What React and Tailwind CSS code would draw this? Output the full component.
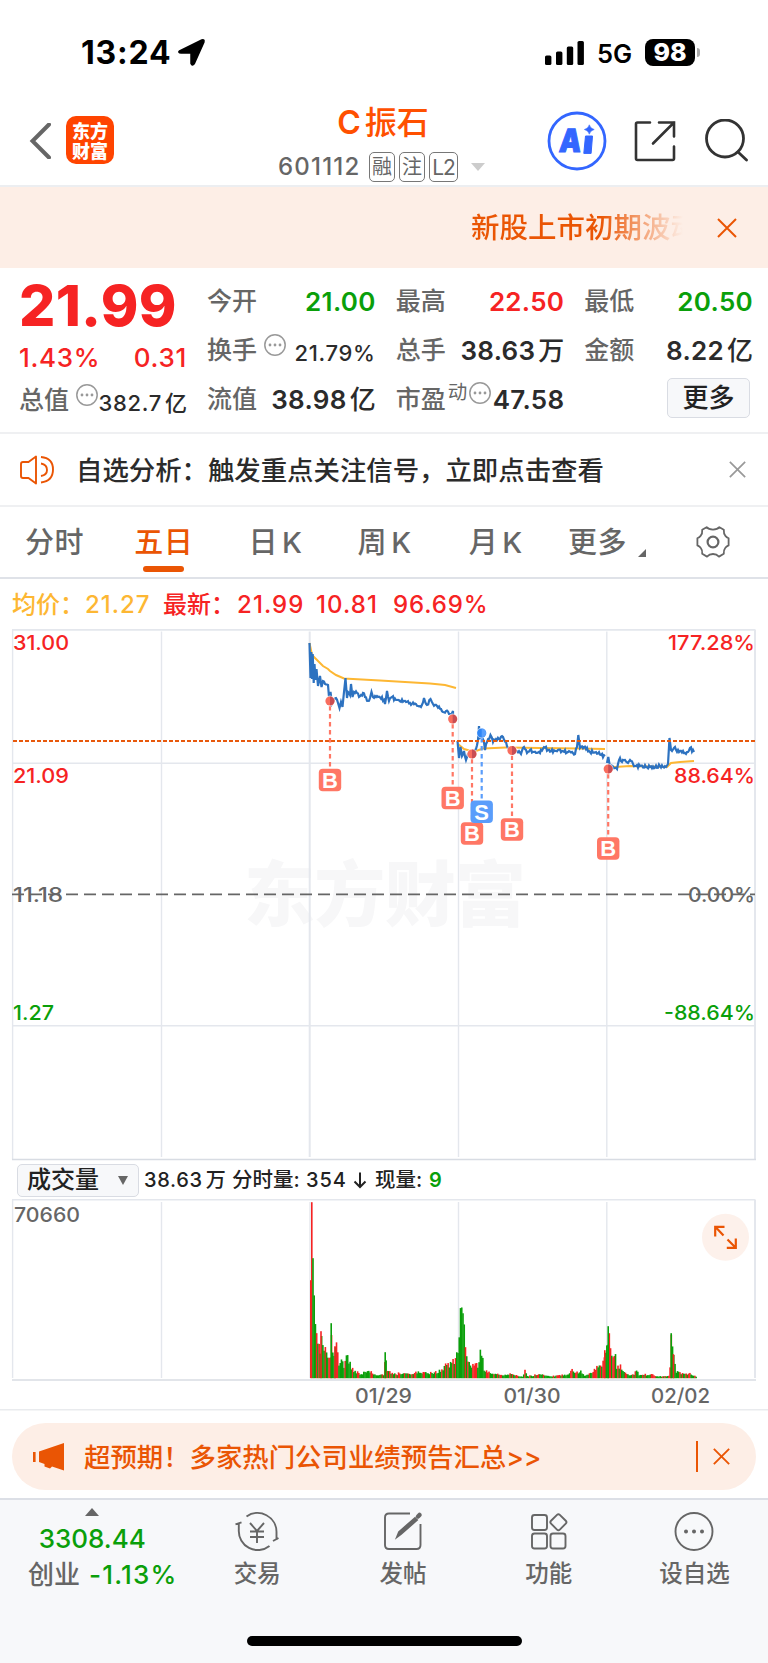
const UP = "text-[#f62323]";
const DOWN = "text-[#0a9f0a]";

const TABS = [
  { label: "分时", left: "ml-[25px]" },
  { label: "五日", left: "ml-[50px]", active: true },
  { label: "日K", left: "ml-[55px]" },
  { label: "周K", left: "ml-[55px]" },
  { label: "月K", left: "ml-[57px]" },
  { label: "更多", left: "ml-[45px]" },
];

// price line, one list of [x, y] per trading day
const PRICE = [
  [[309.5,643],[310.5,678],[311.3,652],[312,679],[312.7,654],[313.7,683],[314.5,664],[315.5,680],[316.5,669],[318,686],[320,676],[321.5,687],[323,681],[325,684],[328,685],[329,697],[330.5,692],[332,704],[334,700],[336,698],[338,703],[339.5,708],[341,702],[342.5,707],[343.8,694],[345.5,678],[347,698],[348,692],[350,695],[351,684],[352.5,697],[354,692],[357,693],[359,697],[361,695],[363,693],[365,697],[368,701],[370,698],[371.5,692],[373,697],[378,697],[382,697],[385,704],[387,691],[389,701],[392,697],[396,700],[404,701],[410,703],[416,704],[421,707],[424,698],[427,705],[430.5,699],[433,704],[437,706],[441,709],[443,712],[446,711],[450,714],[453,711],[453,718]],
  [[457.5,741],[459,758],[460.5,747],[462,756],[464,751],[466,760],[468,754],[472,754],[476,749],[478,740],[479,726],[480,738],[482,735],[484,742],[485,750],[487,742],[490.5,735],[493,742],[496,739],[500,739],[503,737],[506,742],[508,748],[511,750],[516,751],[521,754],[524,747],[527,753],[530,750],[534,752],[540,753],[544,747],[548,750],[555,751],[562,751],[568,752],[575,754],[577,747],[578.3,735],[580,748],[584,747],[590,752],[596,752],[601,755],[605,756]],
  [[607,763],[608.3,757],[610,767],[615,768],[617,769],[620,758],[622,762],[625,760],[628,763],[631,761],[635,766],[640,766],[650,767],[660,766],[666,767],[668,764],[669.5,738],[671,750],[674,748],[679,752],[683,751],[686,754],[690,748],[694,752]],
];

const AVERAGE = [
  "309.5,643 312,655 318,661 323,666 328,669 330,671 336,675 344,678.5 380,680.5 430,683.5 445,685 456,688",
  "458,744 464,749 471,751 476,751 483,748.5 506,747.5 540,748 580,748.5 605,749",
  "607,766 615,767 630,766 667,767 671,763 680,762 694,761",
];

const TRADES = [
  { type: "B", x: 330, y: 701, badge: 780 },
  { type: "B", x: 452.7, y: 719, badge: 798 },
  { type: "B", x: 472, y: 754, badge: 833.5 },
  { type: "S", x: 481.7, y: 733, badge: 811.8 },
  { type: "B", x: 512, y: 750.5, badge: 829.5 },
  { type: "B", x: 608.2, y: 769, badge: 848.5 },
];

// volume profile: [x, height]
const VOLUME = [
  [310,98],[311.3,176],[312.5,120],[314,58],[316,46],[318,30],[320,22],[321,44],[323,32],[325,28],[327,19],[329,16],[330.3,18],[331.3,55],[332.5,20],[335,32],[337,20],[340,14],[341,21],[343,14],[346,22],[349,20],[351,9],[355,7],[360,4],[363,6],[368,7],[375,3],[383.5,4],[385,26],[386.5,8],[395,4],[400,5],[410,4],[420,7],[430,5],[436,6],[443,11],[450,16],[455,20],[458,32],[459.5,70],[461.5,71],[463,58],[464,38],[466,20],[470,14],[475,13],[478,14],[479.5,27],[481.5,26],[483,8],[490,5],[500,3],[510,5],[518,2],[522.5,2],[524,7],[527,2],[540,4],[550,2],[560,3],[568,4],[570,8],[575,5],[580,8],[584,3],[590,5],[595,9],[600,13],[604,24],[606,30],[608,53],[610,25],[613,14],[614.5,24],[616,10],[620,12],[624,5],[630,3],[634,4],[636,9],[638,3],[650,4],[655,2],[668,2],[669.5,12],[671,46],[672.3,25],[673.5,22],[675,8],[680,5],[690,4],[696,1],
];

// single minutes that stand out from the profile
const SPIKES = [
  { x: 310, h: 98, red: true },
  { x: 311, h: 176, red: true },
  { x: 312.2, h: 120 },
  { x: 320.2, h: 47, red: true },
  { x: 330.4, h: 55 },
  { x: 334.2, h: 32, red: true },
  { x: 384.4, h: 26 },
  { x: 604, h: 28, red: true },
  { x: 607.4, h: 52 },
  { x: 670.4, h: 45 },
  { x: 672.6, h: 24, red: true },
];

// stable pseudo random value in 0..1
function noise(n) {
  const v = Math.sin(n * 127.1) * 43758.5453;
  return v - Math.floor(v);
}

function pricePoints(list) {
  const out = [];
  list.forEach(([x, y], i) => {
    out.push(`${x},${y}`);
    const next = list[i + 1];
    if (!next) return;
    const steps = Math.floor(next[0] - x);
    for (let s = 1; s < steps; s++) {
      const t = s / steps;
      const dy = (noise(x + s) - 0.5) * 3.6;
      out.push(`${(x + (next[0] - x) * t).toFixed(1)},${(y + (next[1] - y) * t + dy).toFixed(1)}`);
    }
  });
  return out.join(" ");
}

function volumeBars() {
  const bars = [];
  let k = 0;
  for (let x = 313.4; x <= 696; x += 1.24) {
    while (k < VOLUME.length - 2 && VOLUME[k + 1][0] < x) k++;
    const [x0, h0] = VOLUME[k];
    const [x1, h1] = VOLUME[k + 1];
    const base = h0 + ((h1 - h0) * (x - x0)) / (x1 - x0);
    const red = base < 50 && noise(x * 3 + 1) > 0.7;
    const h = Math.max(1, base > 50 ? base : base * ((red ? 0.9 : 0.7) + noise(x) * 0.4));
    bars.push({ x, h, red });
  }
  return bars.concat(SPIKES);
}

function Close({ size, className, width = 2 }) {
  return (
    <svg width={size} height={size} viewBox="0 0 20 20" className={className} fill="none" stroke="currentColor" strokeWidth={width}>
      <path d="M1 1 19 19M19 1 1 19" />
    </svg>
  );
}

function Dots() {
  return (
    <svg width="22" height="22" viewBox="0 0 22 22" className="shrink-0" fill="none" stroke="#999">
      <circle cx="11" cy="11" r="10.2" strokeWidth="1.5" />
      <path d="M6 11h.01M11 11h.01M16 11h.01" strokeWidth="2.8" strokeLinecap="round" />
    </svg>
  );
}

function StatusBar() {
  return (
    <div className="flex h-[104px] items-center pl-[81px] text-black">
      <span className="w-[96px] pt-[2px] text-[32px] leading-none font-bold tracking-[0.8px]">13:24</span>
      <svg width="29" height="29" viewBox="0 0 28 28">
        <path d="M2.5 12.5 24 2Q26.6 1.2 25.9 4L16.5 25Q14.8 27.4 13.6 24.5V14.5H4Q0.6 14 2.5 12.5Z" fill="#000" stroke="#000" strokeWidth="1.6" strokeLinejoin="round" />
      </svg>
      <svg width="40" height="25" viewBox="0 0 40 25" className="ml-[339px]">
        <rect x="0" y="15.5" width="6.4" height="9.5" rx="1.6" />
        <rect x="11" y="11.5" width="6.4" height="13.5" rx="1.6" />
        <rect x="21.8" y="6.5" width="6.4" height="18.5" rx="1.6" />
        <rect x="32.5" y="1" width="6.4" height="24" rx="1.6" />
      </svg>
      <span className="ml-[12px] w-[48px] pt-[4px] text-[25.5px] leading-none font-semibold">5G</span>
      <span className="flex h-[27px] w-[50px] items-center justify-center rounded-[8px] bg-black text-[25px] leading-none font-extrabold text-white">98</span>
      <span className="ml-[2px] h-[9px] w-[3px] rounded-r-full bg-[#aaa]" />
    </div>
  );
}

function NavBar() {
  return (
    <div className="flex h-[83px] items-start border-b-2 border-[#eceef1]">
      <svg width="22" height="36" viewBox="0 0 22 36" className="mt-[19px] ml-[29px]" fill="none" stroke="#666" strokeWidth="4">
        <path d="M20 1.5 3.5 18 20 34.5" strokeLinecap="round" />
      </svg>
      <div className="mt-[12px] ml-[15px] flex h-[48px] w-[48px] flex-col items-center justify-center rounded-[10px] bg-[#ff4400] font-['Noto_Sans_CJK_SC',sans-serif] text-[18px] leading-[20px] font-black text-white">
        <span>东方</span>
        <span>财富</span>
      </div>
      <div className="ml-[164px] w-[210px]">
        <div className="flex h-[37px] items-center justify-center gap-[4px] text-[32px] leading-none font-semibold text-[#ff5000]">
          <span>C</span>
          <span className="font-medium">振石</span>
        </div>
        <div className="mt-[3px] flex h-[46px] items-center text-[#666]">
          <span className="w-[91px] text-[24px] leading-none font-medium tracking-[1.2px]">601112</span>
          <span className="mr-[4px] flex h-[30px] w-[26px] items-center justify-center rounded-[5px] border border-[#777] text-[20px] leading-none">融</span>
          <span className="mr-[4px] flex h-[30px] w-[26px] items-center justify-center rounded-[5px] border border-[#777] text-[20px] leading-none">注</span>
          <span className="flex h-[30px] w-[29px] items-center justify-center rounded-[5px] border border-[#777] text-[21px] leading-none tracking-[-1px]">L2</span>
          <svg width="14" height="8" viewBox="0 0 14 8" className="ml-[13px]"><path d="M0 0h14L7 8Z" fill="#ccc" /></svg>
        </div>
      </div>
      <svg width="60" height="60" viewBox="0 0 60 60" className="mt-[7px] ml-[59px]">
        <circle cx="30" cy="30" r="28" fill="none" stroke="#3366ff" strokeWidth="2.8" />
        <text x="12" y="41" fontSize="32" fontWeight="900" fill="#3366ff" stroke="#3366ff" transform="skewX(-5) translate(3 0)" textLength="22" lengthAdjust="spacingAndGlyphs">A</text>
        <path d="M38.5 25h7l-1.4 17.4h-7.3Z" fill="#3366ff" stroke="#3366ff" strokeLinejoin="round" />
        <path d="M42.3 13.8Q43.2 17.6 47.2 18.5 43.2 19.5 42.3 23.2 41.4 19.5 37.4 18.5 41.4 17.6 42.3 13.8Z" fill="#3366ff" stroke="#3366ff" strokeWidth=".6" />
      </svg>
      <svg width="44" height="44" viewBox="0 0 44 44" className="mt-[15px] ml-[26px]" fill="none" stroke="#333" strokeWidth="2.6" strokeLinecap="round">
        <path d="M17 3.5H4.5Q3 3.5 3 5V39.5Q3 41 4.5 41H39.5Q41 41 41 39.5V27.5M26 3.5H41V17.5M41 3.5 20 24.5" />
      </svg>
      <svg width="44" height="44" viewBox="0 0 44 44" className="mt-[15px] ml-[27px]" fill="none" stroke="#333" strokeWidth="2.8" strokeLinecap="round">
        <circle cx="21" cy="19.5" r="18.5" />
        <path d="m34 33 8.5 8" />
      </svg>
    </div>
  );
}

function Notice() {
  return (
    <div className="flex h-[81px] items-center bg-[#fdeee6] text-[#ea5504]">
      <div className="ml-[471px] w-[216px] overflow-hidden bg-linear-to-r from-[#ea5504] from-60% to-[#ea550400] to-98% bg-clip-text text-[28.5px] leading-[40px] font-medium whitespace-nowrap text-transparent">
        新股上市初期波动
      </div>
      <Close size="20" className="ml-[30px]" />
    </div>
  );
}

function Cell({ label, value, unit, extra, small, color = "text-[#2b2b2b]" }) {
  return (
    <div className="flex h-[49px] items-center whitespace-nowrap">
      <span className="text-[25px] leading-none font-medium text-[#666]">{label}</span>
      {extra}
      <span className={`ml-auto leading-none ${color} ${small ? "pt-[5px] text-[22px] font-medium tracking-[0.7px]" : "text-[26px] font-semibold tracking-[0.3px]"}`}>
        {value}
        {unit && <span className="ml-[3px] font-medium tracking-normal">{unit}</span>}
      </span>
    </div>
  );
}

function Quote() {
  return (
    <div className="flex h-[166px] border-b-2 border-[#eff0f2] pt-[9px]">
      <div className="ml-[19px] w-[168px]">
        <div className={`h-[57px] text-[57px] leading-[57px] font-extrabold tracking-[0.3px] whitespace-nowrap ${UP}`}>21.99</div>
        <div className={`flex h-[42px] items-center justify-between pt-[6px] text-[26px] leading-none font-medium tracking-[0.7px] ${UP}`}>
          <span>1.43%</span>
          <span>0.31</span>
        </div>
        <Cell label="总值" value="382.7" unit="亿" small extra={<span className="-mr-[6px] ml-[7px] -mt-[12px]"><Dots /></span>} />
      </div>
      <div className="ml-[20px] grid w-[546px] grid-cols-3 content-start gap-x-[20px]">
        <Cell label="今开" value="21.00" color={DOWN} />
        <Cell label="最高" value="22.50" color={UP} />
        <Cell label="最低" value="20.50" color={DOWN} />
        <Cell label="换手" value="21.79%" small extra={<span className="ml-[7px] -mt-[11px]"><Dots /></span>} />
        <Cell label="总手" value="38.63" unit="万" />
        <Cell label="金额" value="8.22" unit="亿" />
        <Cell label="流值" value="38.98" unit="亿" />
        <Cell
          label="市盈"
          value="47.58"
          extra={
            <span className="-mt-[13px] flex items-center pl-[2px] text-[19.5px] leading-none text-[#666]">
              动<span className="ml-[2px]"><Dots /></span>
            </span>
          }
        />
        <div className="flex h-[49px] items-start justify-end pt-[3px] pr-[3px]">
          <button className="h-[40px] w-[83px] rounded-[5px] border border-[#d9dce3] bg-[#f7f8fa] text-[26px] leading-none font-medium text-[#222]">更多</button>
        </div>
      </div>
    </div>
  );
}

function SignalRow() {
  return (
    <div className="flex h-[73px] items-center border-b-2 border-[#eff0f2]">
      <svg width="36" height="30" viewBox="0 0 36 30" className="ml-[19px]" fill="none" stroke="#ea5504" strokeWidth="1.9">
        <path d="M17 1.5V28.5L9.5 23H4Q2 23 2 21V9Q2 7 4 7H9.5ZM22 2Q34 3 34 14.5 34 26 22 27.5M22 8.5Q28 9.5 28 15 28 20 22 21" strokeLinejoin="round" />
      </svg>
      <span className="ml-[21px] w-[640px] pt-[2px] text-[26.4px] leading-none font-medium text-[#2b2b2b]">自选分析：触发重点关注信号，立即点击查看</span>
      <Close size="17" className="ml-[13px] text-[#999]" />
    </div>
  );
}

function Tabs() {
  return (
    <div className="flex h-[72px] items-center border-b-2 border-[#dfe2e8] text-[29px] leading-none font-medium tracking-[0.6px] text-[#666]">
      {TABS.map((t) => (
        <div key={t.label} className={`relative flex h-full items-center gap-[4px] whitespace-nowrap ${t.left} ${t.active ? "text-[#ea5504]" : ""}`}>
          {t.label.endsWith("K") ? (
            <>
              <span>{t.label[0]}</span>
              <span>K</span>
            </>
          ) : (
            <span>{t.label}</span>
          )}
          {t.active && <span className="absolute bottom-[5px] left-[9px] h-[6px] w-[41px] rounded-full bg-[#ea5504]" />}
        </div>
      ))}
      <svg width="8" height="8" viewBox="0 0 8 8" className="mt-[22px] ml-[11px]"><path d="M8 0v8H0Z" fill="#666" /></svg>
      <svg width="34" height="34" viewBox="0 0 34 34" className="ml-[50px]" fill="none" stroke="#666" strokeWidth="1.8">
        <path d="M10.6 2.2Q12.6 4.6 17 4.6T23.4 2.2L27.8 4.8Q27.6 9 29.4 10.8 30.6 12.2 32.6 13.2V20.4Q30.4 21.4 29.2 23 27.6 25 27.8 28.8L23 31.6Q20.6 29 17 29T11 31.6L6.2 28.8Q6.6 25.2 4.8 23 3.6 21.4 1.4 20.4V13.2Q3.4 12.2 4.6 10.8 6.6 8.6 6.2 4.8Z" strokeLinejoin="round" />
        <circle cx="17" cy="17" r="5.4" strokeWidth="2.2" />
      </svg>
    </div>
  );
}

function Legend() {
  return (
    <div className={`flex h-[50px] items-center pt-[2px] pl-[12px] text-[24px] leading-none font-medium whitespace-nowrap ${UP}`}>
      <span className="w-[73px] text-[#fdb733]">均价：</span>
      <span className="w-[78px] tracking-[1px] text-[#fdb733]">21.27</span>
      <span className="w-[74px]">最新：</span>
      <span className="w-[79px] tracking-[1.1px]">21.99</span>
      <span className="w-[77px] tracking-[1.1px]">10.81</span>
      <span className="tracking-[0.9px]">96.69%</span>
    </div>
  );
}

function Axis({ x, y, w, right, fill, children }) {
  return (
    <text x={x} y={y} fontSize="20" fontWeight="500" fill={fill} textAnchor={right ? "end" : "start"} textLength={w} lengthAdjust="spacingAndGlyphs">
      {children}
    </text>
  );
}

function PriceChart() {
  return (
    <svg width="768" height="532" viewBox="0 629 768 532" className="block shrink-0">
      <text x="244" y="920" fontSize="71" fontWeight="900" fill="#f7f7f8" textLength="282" className="font-['Noto_Sans_CJK_SC']">东方财富</text>
      <g stroke="#e4e7ed" strokeWidth="1.4" fill="none">
        <path d="M12.6 629.7V1159.5M161.5 631.5V1157M458.5 631.5V1157M606.8 631.5V1157M12 763.3H755M12 1025.7H755" />
        <path d="M309.7 631.5V1157M755 629.5V1159.5M12 629.7H755" strokeWidth="2" />
        <path d="M12 1159.5H756" stroke="#d8dce3" strokeWidth="1.6" />
      </g>
      <path d="M12 894.3H755" stroke="#666" strokeWidth="1.8" strokeDasharray="12 6" />
      {AVERAGE.map((points) => (
        <polyline key={points} points={points} fill="none" stroke="#fdb733" strokeWidth="2" />
      ))}
      {PRICE.map((day, i) => (
        <polyline key={i} points={pricePoints(day)} fill="none" stroke="#2d72c0" strokeWidth="2.2" />
      ))}
      <path d="M13 741H755" stroke="#e8590c" strokeWidth="2.2" strokeDasharray="4 2" />
      {TRADES.map((t, i) => {
        const color = t.type === "B" ? "#ff7765" : "#5a9dfb";
        return (
          <g key={i}>
            <path d={`M${t.x} ${t.y + 5}V${t.badge - 11}`} stroke={color} strokeWidth="2.2" strokeDasharray="4.5 3.5" />
            <circle cx={t.x} cy={t.y} r="5.4" fill="#fff" opacity="0.7" />
            <circle cx={t.x} cy={t.y} r="4.6" fill={t.type === "B" ? "#f86d5e" : "#2f86f6"} />
            <path d={`M${t.x} ${t.y}v-4.4a4.4 4.4 0 0 1 0 8.8Z`} fill={t.type === "B" ? "#b84350" : "#68a8ff"} opacity="0.75" />
            <rect x={t.x - 11.2} y={t.badge - 11.2} width="22.4" height="22.4" rx="4" fill={color} />
            <text x={t.x} y={t.badge + 7.8} fontSize="22" fontWeight="700" fill="#fff" textAnchor="middle" className="font-['Liberation_Sans']">{t.type}</text>
          </g>
        );
      })}
      <Axis x="13" y="650" w="56" fill="#f62323">31.00</Axis>
      <Axis x="13" y="782.5" w="56" fill="#f62323">21.09</Axis>
      <Axis x="13" y="901.5" w="50" fill="#666">11.18</Axis>
      <Axis x="13" y="1019.5" w="41" fill="#0a9f0a">1.27</Axis>
      <Axis x="755" y="650" w="87" right fill="#f62323">177.28%</Axis>
      <Axis x="755" y="782.5" w="81" right fill="#f62323">88.64%</Axis>
      <Axis x="755" y="901.5" w="67" right fill="#666">0.00%</Axis>
      <Axis x="755" y="1019.5" w="91" right fill="#0a9f0a">-88.64%</Axis>
    </svg>
  );
}

function VolumeHeader() {
  return (
    <div className="flex h-[38px] shrink-0 items-center pl-[17px] text-[20px] leading-none font-medium whitespace-nowrap text-[#222]">
      <div className="flex h-[33px] w-[122px] items-center rounded-[5px] border border-[#d9dce3] bg-[#f7f8fa] pl-[9px] text-[24px]">
        成交量
        <svg width="10" height="9" viewBox="0 0 10 9" className="ml-[19px]"><path d="M0 0h10L5 9Z" fill="#666" /></svg>
      </div>
      <span className="ml-[5px] w-[88px] tracking-[0.7px]">38.63<span className="ml-[3px]">万</span></span>
      <span className="w-[74px] text-[20.5px]">分时量:</span>
      <span className="w-[46px] tracking-[0.9px]">354</span>
      <svg width="16" height="18" viewBox="0 0 16 18" className="mr-[7px]" fill="none" stroke="#222" strokeWidth="2"><path d="M8 1.5V16M2.5 10.5 8 16 13.5 10.5" /></svg>
      <span className="w-[54px] text-[20.5px]">现量:</span>
      <span className={`font-semibold ${DOWN}`}>9</span>
    </div>
  );
}

function VolumeChart() {
  return (
    <svg width="768" height="212" viewBox="0 1199 768 212" className="block shrink-0">
      <g stroke="#e4e7ed" strokeWidth="1.4" fill="none">
        <path d="M12.6 1199.7V1378M161.5 1202V1378M310 1202V1378M458.5 1202V1378M606.8 1202V1378M12 1199.7H755" />
        <path d="M755 1199.5V1378" strokeWidth="2" />
        <path d="M12 1380H756" stroke="#d8dce3" strokeWidth="1.6" />
      </g>
      {volumeBars().map((b) => (
        <rect key={b.x} x={b.x} y={1378.2 - b.h} width="1.6" height={b.h} fill={b.red ? "#f62323" : "#0a9f0a"} />
      ))}
      <Axis x="14" y="1221.5" w="66" fill="#666">70660</Axis>
      <Axis x="355" y="1402.5" w="57" fill="#666">01/29</Axis>
      <Axis x="503.5" y="1402.5" w="57" fill="#666">01/30</Axis>
      <Axis x="651" y="1402.5" w="59" fill="#666">02/02</Axis>
      <circle cx="725.5" cy="1237.3" r="23.5" fill="#fdf1eb" />
      <path d="M724.5 1226.8H715.2V1236.5M715.5 1227 723.5 1235.5M726.8 1247.8H735.8V1238.5M735.5 1247.5 727.5 1239.5" fill="none" stroke="#ea5504" strokeWidth="2.2" />
      <path d="M0 1409.7H768" stroke="#e9ebee" strokeWidth="1.4" />
    </svg>
  );
}

function Promo() {
  return (
    <div className="mx-[12px] mt-[12px] flex h-[67px] shrink-0 items-center rounded-full bg-[#fdeee6] text-[#ea5504]">
      <svg width="32" height="28" viewBox="0 0 32 28" className="ml-[21px]" fill="currentColor">
        <path d="M0 9h2.6v10H0ZM6 8.5 31 0V27.5L19 23.5 17 25.5 11.5 23.5V21L6 19Z" />
      </svg>
      <span className="ml-[19px] pt-[2px] text-[26.4px] leading-none font-medium">超预期！多家热门公司业绩预告汇总&gt;&gt;</span>
      <span className="ml-auto h-[31px] w-[2px] bg-[#ea5504]" />
      <Close size="17" className="mr-[26px] ml-[15px]" width={2.2} />
    </div>
  );
}

function NavItem({ label, children }) {
  return (
    <div className="flex w-[145.7px] flex-col items-center pt-[10px]">
      <svg width="44" height="44" viewBox="0 0 44 44" fill="none" stroke="#666" strokeWidth="1.9">{children}</svg>
      <span className="mt-[8px] text-[23.5px] leading-[24px] font-medium text-[#666]">{label}</span>
    </div>
  );
}

function BottomBar() {
  return (
    <div className="mt-[8px] flex h-[165px] shrink-0 flex-col border-t-2 border-[#dcdfe6] bg-[#f7f8fa]">
      <div className="flex h-[136px]">
        <div className="flex w-[184.5px] flex-col items-center">
          <svg width="14" height="8" viewBox="0 0 14 8" className="mt-[8px]"><path d="M0 8h14L7 0Z" fill="#666" /></svg>
          <span className={`mt-[10px] text-[26px] leading-[26px] font-medium ${DOWN}`}>3308.44</span>
          <div className="mt-[10px] ml-[21px] flex gap-[9px] text-[26px] leading-[26px] font-medium whitespace-nowrap">
            <span className="text-[#666]">创业</span>
            <span className={`tracking-[1.2px] ${DOWN}`}>-1.13%</span>
          </div>
        </div>
        <NavItem label="交易">
          <path d="M11 6.5A19 19 0 0 1 41 22.5V30M3.3 12.5V20A19 19 0 0 0 34 36M0 14.3 6 12.3M37.5 31 43 28" transform="translate(.5 0)" />
          <path d="M15 13 22 21 29 13M15 21.5H29M15 27H29M22 21V33" />
        </NavItem>
        <NavItem label="发帖">
          <path d="M29 3.5H8Q4 3.5 4 7.5V35Q4 39 8 39H35.5Q39.5 39 39.5 35V14" />
          <path d="m16 27 2-5L34 8l2 2-16 14Z" fill="#666" />
          <path d="m37 6.5 1.5-1.5" strokeWidth="4.5" strokeLinecap="round" />
        </NavItem>
        <NavItem label="功能">
          <rect x="5" y="5" width="15" height="15" rx="2.5" />
          <rect x="5" y="23.5" width="15" height="15" rx="2.5" />
          <rect x="23.5" y="23.5" width="15" height="15" rx="2.5" />
          <rect x="25.2" y="6" width="12.4" height="12.4" rx="2" transform="rotate(45 31.4 12.2)" />
        </NavItem>
        <NavItem label="设自选">
          <circle cx="22" cy="21.5" r="18.5" />
          <path d="M14 21.5h.01M22 21.5h.01M30 21.5h.01" strokeWidth="4" strokeLinecap="round" />
        </NavItem>
      </div>
      <div className="mx-auto h-[10px] w-[275px] rounded-full bg-black" />
    </div>
  );
}

export default function App() {
  return (
    <div className="flex h-[1663px] w-[768px] flex-col overflow-hidden bg-white font-['Inter','Noto_Sans_CJK_SC',sans-serif]">
      <StatusBar />
      <NavBar />
      <Notice />
      <Quote />
      <SignalRow />
      <Tabs />
      <Legend />
      <PriceChart />
      <VolumeHeader />
      <VolumeChart />
      <Promo />
      <BottomBar />
    </div>
  );
}
